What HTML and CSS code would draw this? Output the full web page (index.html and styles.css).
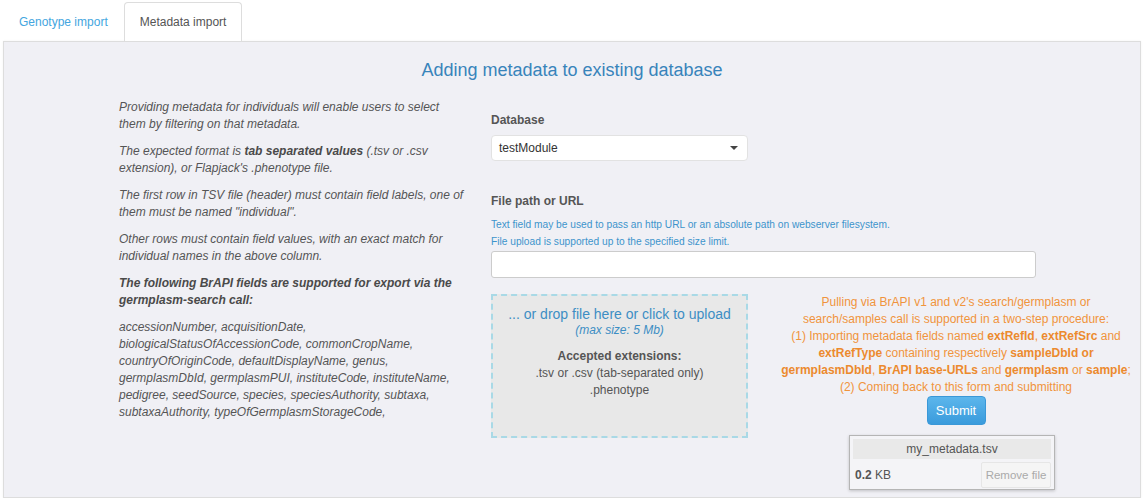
FILE: index.html
```html
<!DOCTYPE html>
<html>
<head>
<meta charset="utf-8">
<link rel="stylesheet" href="styles.css">
</head>
<body>
<ul class="tabs">
  <li class="tab"><a class="tab-link">Genotype import</a></li>
  <li class="tab active"><a class="tab-link">Metadata import</a></li>
</ul>
<div class="panel">
  <h3 class="title">Adding metadata to existing database</h3>
  <div class="row">
    <div class="left">
      <p>Providing metadata for individuals will enable users to select them by filtering on that metadata.</p>
      <p>The expected format is <b>tab separated values</b> (.tsv or .csv extension), or Flapjack's .phenotype file.</p>
      <p>The first row in TSV file (header) must contain field labels, one of them must be named "individual".</p>
      <p>Other rows must contain field values, with an exact match for individual names in the above column.</p>
      <p><b>The following BrAPI fields are supported for export via the germplasm-search call:</b></p>
      <p>accessionNumber, acquisitionDate, biologicalStatusOfAccessionCode, commonCropName, countryOfOriginCode, defaultDisplayName, genus, germplasmDbId, germplasmPUI, instituteCode, instituteName, pedigree, seedSource, species, speciesAuthority, subtaxa, subtaxaAuthority, typeOfGermplasmStorageCode,</p>
    </div>
    <div class="right">
      <label class="label">Database</label>
      <div class="select"><span>testModule</span><span class="caret"></span></div>
      <label class="label label-file">File path or URL</label>
      <div class="help">Text field may be used to pass an http URL or an absolute path on webserver filesystem.</div>
      <div class="help">File upload is supported up to the specified size limit.</div>
      <div class="input"></div>
      <div class="bottom">
        <div class="dropzone">
          <div class="drop-main">... or drop file here or click to upload</div>
          <div class="drop-size">(max size: 5 Mb)</div>
          <div class="drop-ext-title">Accepted extensions:</div>
          <div class="drop-ext">.tsv or .csv (tab-separated only)</div>
          <div class="drop-ext">.phenotype</div>
        </div>
        <div class="brapi">
          <div class="orange">Pulling via BrAPI v1 and v2's search/germplasm or<br>search/samples call is supported in a two-step procedure:<br>(1) Importing metadata fields named <b>extRefId</b>, <b>extRefSrc</b> and<br><b>extRefType</b> containing respectively <b>sampleDbId or<br>germplasmDbId</b>, <b>BrAPI base-URLs</b> and <b>germplasm</b> or <b>sample</b>;<br>(2) Coming back to this form and submitting</div>
          <button class="submit">Submit</button>
          <div class="filecard">
            <div class="filename">my_metadata.tsv</div>
            <div class="filerow">
              <span class="filesize"><b>0.2</b> KB</span>
              <span class="remove">Remove file</span>
            </div>
          </div>
        </div>
      </div>
    </div>
  </div>
</div>
</body>
</html>
```
FILE: styles.css
```css
* { box-sizing: border-box; }
html, body {
  margin: 0;
  padding: 0;
  background: #fff;
  font-family: "Liberation Sans", Arial, Helvetica, sans-serif;
  color: #555;
  font-size: 12px;
}
.tabs {
  list-style: none;
  margin: 2px 0 0 3px;
  padding: 0;
  display: flex;
}
.tab {
  margin-right: 0;
}
.tab-link {
  display: block;
  padding: 10px 15px;
  line-height: 18px;
  font-size: 12px;
  color: #44a6e0;
  border: 1px solid transparent;
  border-bottom: none;
  border-radius: 4px 4px 0 0;
}
.tab.active .tab-link {
  color: #555;
  background: #fff;
  border-color: #ddd;
}
.panel {
  margin: 0 2px 0 3px;
  border: 1px solid #ddd;
  background: #f0f0f5;
  padding: 18px 0 7px;
  box-shadow: 0 0 2px rgba(0,0,0,0.06);
}
.title {
  margin: 0;
  text-align: center;
  font-size: 18px;
  line-height: 20px;
  font-weight: normal;
  color: #3884bb;
}
.row {
  display: grid;
  grid-template-columns: 347px 649px;
  column-gap: 25px;
  padding-left: 115px;
  margin-top: 19px;
}
.left p {
  margin: 0 0 10px;
  font-style: italic;
  line-height: 17px;
  color: #555;
}
.left p b { color: #4a4a4a; }
.right {
  padding-top: 13px;
}
.label {
  display: block;
  font-weight: bold;
  line-height: 17px;
  color: #555;
  margin-bottom: 6px;
}
.label-file {
  margin-top: 32px;
}
.select {
  width: 257px;
  height: 26px;
  background: #fff;
  border: 1px solid #e2e2e2;
  border-radius: 4px;
  display: flex;
  align-items: center;
  justify-content: space-between;
  padding: 0 9px 0 7px;
  color: #333;
}
.caret {
  width: 0;
  height: 0;
  border-left: 4px solid transparent;
  border-right: 4px solid transparent;
  border-top: 4px solid #444;
}
.help {
  font-size: 10.2px;
  line-height: 17px;
  color: #3d94cc;
}
.input {
  margin-top: 1px;
  width: 545px;
  height: 27px;
  background: #fff;
  border: 1px solid #ccc;
  border-radius: 3px;
}
.bottom {
  display: flex;
  margin-top: 16px;
}
.dropzone {
  width: 257px;
  height: 144px;
  flex: none;
  border: 2px dashed #a9d9e6;
  background: #e8e8e8;
  text-align: center;
  padding-top: 10px;
}
.drop-main {
  font-size: 14px;
  line-height: 16px;
  color: #3d8ec4;
}
.drop-size {
  font-style: italic;
  line-height: 16px;
  color: #3d8ec4;
}
.drop-ext-title {
  margin-top: 10px;
  font-weight: bold;
  line-height: 17px;
}
.drop-ext {
  line-height: 17px;
}
.brapi {
  width: 368px;
  margin-left: 24px;
  display: flex;
  flex-direction: column;
  align-items: center;
}
.orange {
  text-align: center;
  line-height: 17px;
  color: #f0943c;
  white-space: nowrap;
}
.orange b { color: #ec8a2e; }
.submit {
  margin-top: 0;
  width: 59px;
  height: 29px;
  border: 1px solid #3a98d8;
  border-radius: 4px;
  background: linear-gradient(#5cb6ec, #3a9bdc);
  color: #fff;
  font-family: "Liberation Sans", Arial, sans-serif;
  font-size: 13px;
  padding: 0;
}
.filecard {
  margin-top: 10px;
  margin-right: 8px;
  width: 206px;
  height: 55px;
  border: 1px solid #b5b5b5;
  box-shadow: 0 1px 3px rgba(0,0,0,0.2);
  background: #f4f4f7;
  padding: 3px;
}
.filename {
  background: #e9e9e9;
  height: 20px;
  line-height: 20px;
  text-align: center;
  color: #555;
}
.filerow {
  display: flex;
  justify-content: space-between;
  align-items: center;
  margin-top: 3px;
  padding-left: 2px;
}
.filesize b { color: #555; }
.remove {
  width: 70px;
  height: 26px;
  line-height: 24px;
  text-align: center;
  background: #f5f5f5;
  border: 1px solid #e6e6e6;
  border-radius: 2px;
  color: #aaa;
  font-size: 11.5px;
}
```
